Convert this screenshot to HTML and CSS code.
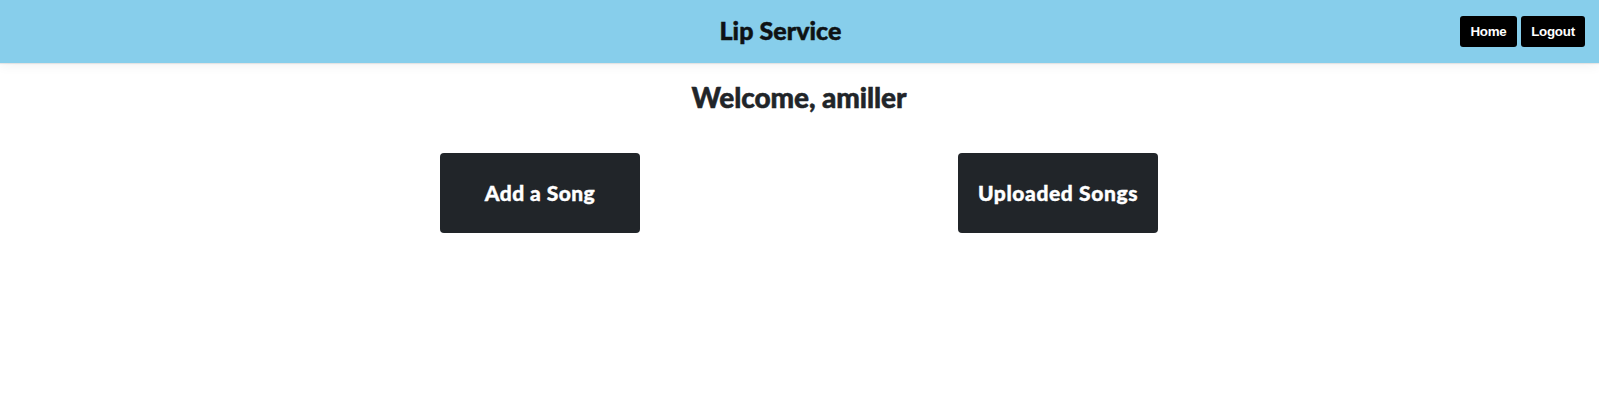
FILE: index.html
```html
<!DOCTYPE html>
<html lang="en">
<head>
<meta charset="utf-8">
<title>Lip Service</title>
<link rel="stylesheet" href="styles.css">
</head>
<body>
<header class="header">
  <h1 class="brand"><span>Lip Service</span></h1>
  <nav class="nav">
    <button class="nav-button home">Home</button>
    <button class="nav-button logout">Logout</button>
  </nav>
</header>
<main>
  <h2 class="welcome"><span>Welcome, amiller</span></h2>
  <div class="actions">
    <div class="column"><button class="card add"><span>Add a Song</span></button></div>
    <div class="column"><button class="card uploaded"><span>Uploaded Songs</span></button></div>
  </div>
</main>
</body>
</html>
```

FILE: styles.css
```css
* { box-sizing: border-box; }
body {
  margin: 0;
  background: #fff;
  color: #212529;
  font-family: Lato, "Liberation Sans", sans-serif;
}
.header {
  display: flex;
  align-items: center;
  height: 63px;
  padding-right: 14px;
  background: #87ceeb;
  box-shadow: 0 1px 1px rgba(0, 0, 0, .08), 0 2px 12px rgba(0, 0, 0, .06);
}
.brand {
  flex: 1;
  margin: 0;
  padding: 0 0 3px 101px;
  text-align: center;
  color: #0e1214;
  font-size: 25px;
  line-height: 30px;
  font-weight: 900;
  letter-spacing: .05px;
  -webkit-text-stroke: .5px;
}
.nav { display: flex; gap: 4px; }
.nav-button {
  height: 31px;
  padding: 0;
  border: 0;
  border-radius: 3px;
  background: #000;
  color: #fff;
  font: bold 13.333px/31px "Liberation Sans", sans-serif;
  letter-spacing: -.25px;
}
.home { width: 57px; }
.logout { width: 64px; }
.welcome {
  margin: 17px 0 0;
  padding-right: 1px;
  text-align: center;
  font-size: 28px;
  line-height: 34px;
  font-weight: 900;
  letter-spacing: -.1px;
  -webkit-text-stroke: .5px;
}
.actions {
  display: grid;
  grid-template-columns: 518px 518px;
  justify-content: center;
  margin-top: 39px;
  padding-right: 1px;
}
.column { display: flex; justify-content: center; }
.card {
  width: 200px;
  height: 80px;
  padding: 0;
  border: 0;
  border-radius: 4px;
  background: #212529;
  color: #fff;
  font: 900 21px/26px Lato, "Liberation Sans", sans-serif;
  letter-spacing: .6px;
  -webkit-text-stroke: .4px;
  white-space: nowrap;
}
.add { letter-spacing: .45px; }
```
